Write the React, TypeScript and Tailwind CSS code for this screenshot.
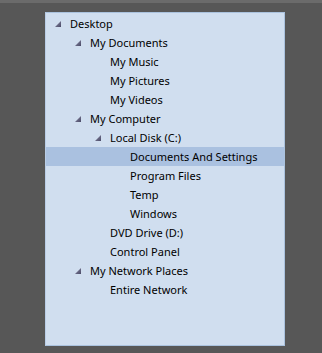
import React from "react";

type Node = { label: string; depth: number; expanded?: boolean; selected?: boolean };

const nodes: Node[] = [
    { label: "Desktop", depth: 0, expanded: true },
    { label: "My Documents", depth: 1, expanded: true },
    { label: "My Music", depth: 2 },
    { label: "My Pictures", depth: 2 },
    { label: "My Videos", depth: 2 },
    { label: "My Computer", depth: 1, expanded: true },
    { label: "Local Disk (C:)", depth: 2, expanded: true },
    { label: "Documents And Settings", depth: 3, selected: true },
    { label: "Program Files", depth: 3 },
    { label: "Temp", depth: 3 },
    { label: "Windows", depth: 3 },
    { label: "DVD Drive (D:)", depth: 2 },
    { label: "Control Panel", depth: 2 },
    { label: "My Network Places", depth: 1, expanded: true },
    { label: "Entire Network", depth: 2 },
];

const indent = ["pl-[8px]", "pl-[28px]", "pl-[48px]", "pl-[68px]"];

function Arrow() {
    return (
        <svg width="6" height="6" viewBox="0 0 6 6">
            <defs>
                <linearGradient id="tri" x1="0" y1="0" x2="1" y2="1">
                    <stop offset="0" stopColor="#8a8aa6" />
                    <stop offset="1" stopColor="#4a4a66" />
                </linearGradient>
            </defs>
            <polygon points="6,0 6,6 0,6" fill="url(#tri)" />
        </svg>
    );
}

export default function App() {
    return (
        <div className="w-[322px] h-[353px] bg-[#575757] flex flex-col font-['Noto_Sans',sans-serif]">
            <div className="h-[3px] bg-[#6b6b6b]" />
            <div className="pt-[9px] pl-[45px]">
                <div className="w-[240px] h-[334px] bg-[#d0deef] border border-[#aac2de] border-l-[#b9cde6] pt-[1px]">
                    {nodes.map((n, i) => (
                        <div
                            key={i}
                            className={`h-[19px] flex items-center text-[11px] text-black ${indent[n.depth]} ${n.selected ? "bg-[#aac1e0]" : ""}`}
                        >
                            <span className="w-[16px] flex items-center justify-start pl-[1px]">
                                {n.expanded && <Arrow />}
                            </span>
                            <span className="leading-none">{n.label}</span>
                        </div>
                    ))}
                </div>
            </div>
        </div>
    );
}
